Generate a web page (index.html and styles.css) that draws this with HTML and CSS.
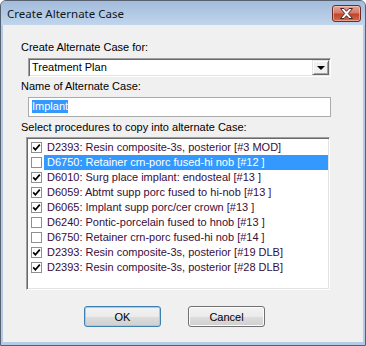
FILE: index.html
```html
<!DOCTYPE html>
<html lang="en">
<head>
  <meta charset="UTF-8" />
  <title>Create Alternate Case</title>
  <link rel="stylesheet" href="styles.css">
</head>
<body>
  <div class="window">
    <!-- Title bar -->
    <div class="titlebar">
      <span class="title">Create Alternate Case</span>
      <span class="close">
        <svg width="15" height="11" viewBox="0 0 15 11">
          <path d="M1.5 0.5 H5 L7.5 3.3 L10 0.5 H13.5 L9.3 5.5 L13.5 10.5 H10 L7.5 7.7 L5 10.5 H1.5 L5.7 5.5 Z"
            fill="#fff" stroke="#4b2626" stroke-width="1" stroke-linejoin="round" />
        </svg>
      </span>
    </div>

    <!-- Dialog body -->
    <div class="client">
      <label class="field-label">Create Alternate Case for:</label>
      <div class="combo">
        <span class="combo-value">Treatment Plan</span>
        <span class="combo-btn"><span class="arrow"></span></span>
      </div>

      <label class="field-label">Name of Alternate Case:</label>
      <div class="textbox"><span class="selected">Implant</span></div>

      <label class="field-label">Select procedures to copy into alternate Case:</label>
      <ul class="proc-list">
        <li class="proc"><span class="check"><svg width="9" height="9" viewBox="0 0 9 9"><path d="M1.2 4.4 L3.4 6.8 L7.8 1.6" fill="none" stroke="#000" stroke-width="1.7" /></svg></span><span class="proc-text">D2393: Resin composite-3s, posterior [#3 MOD]</span></li>
        <li class="proc selected-row"><span class="check"></span><span class="proc-text">D6750: Retainer crn-porc fused-hi nob [#12 ]</span></li>
        <li class="proc"><span class="check"><svg width="9" height="9" viewBox="0 0 9 9"><path d="M1.2 4.4 L3.4 6.8 L7.8 1.6" fill="none" stroke="#000" stroke-width="1.7" /></svg></span><span class="proc-text">D6010: Surg place implant: endosteal [#13 ]</span></li>
        <li class="proc"><span class="check"><svg width="9" height="9" viewBox="0 0 9 9"><path d="M1.2 4.4 L3.4 6.8 L7.8 1.6" fill="none" stroke="#000" stroke-width="1.7" /></svg></span><span class="proc-text">D6059: Abtmt supp porc fused to hi-nob [#13 ]</span></li>
        <li class="proc"><span class="check"><svg width="9" height="9" viewBox="0 0 9 9"><path d="M1.2 4.4 L3.4 6.8 L7.8 1.6" fill="none" stroke="#000" stroke-width="1.7" /></svg></span><span class="proc-text">D6065: Implant supp porc/cer crown [#13 ]</span></li>
        <li class="proc"><span class="check"></span><span class="proc-text">D6240: Pontic-porcelain fused to hnob [#13 ]</span></li>
        <li class="proc"><span class="check"></span><span class="proc-text">D6750: Retainer crn-porc fused-hi nob [#14 ]</span></li>
        <li class="proc"><span class="check"><svg width="9" height="9" viewBox="0 0 9 9"><path d="M1.2 4.4 L3.4 6.8 L7.8 1.6" fill="none" stroke="#000" stroke-width="1.7" /></svg></span><span class="proc-text">D2393: Resin composite-3s, posterior [#19 DLB]</span></li>
        <li class="proc"><span class="check"><svg width="9" height="9" viewBox="0 0 9 9"><path d="M1.2 4.4 L3.4 6.8 L7.8 1.6" fill="none" stroke="#000" stroke-width="1.7" /></svg></span><span class="proc-text">D2393: Resin composite-3s, posterior [#28 DLB]</span></li>
      </ul>

      <div class="actions">
        <button class="btn btn-default">OK</button>
        <button class="btn">Cancel</button>
      </div>
    </div>
  </div>
</body>
</html>
```

FILE: styles.css
```css
* {
  box-sizing: border-box;
  margin: 0;
  padding: 0;
}

body {
  background: #fff;
  font-family: "Liberation Sans", Arial, sans-serif;
  font-size: 11px;
  color: #000;
}

.window {
  width: 366px;
  height: 346px;
  border: 1px solid #56606e;
  border-radius: 6px 6px 0 0;
  background: #b4cbe6;
  display: flex;
  flex-direction: column;
  overflow: hidden;
}

.titlebar {
  height: 24px;
  flex: none;
  display: flex;
  align-items: center;
  justify-content: space-between;
  padding: 0 4px 0 6px;
  background: linear-gradient(#a2bcdc, #c1d5ec);
}

.title {
  font-family: "Segoe UI", "Noto Sans", sans-serif;
  font-size: 11.5px;
  color: #101820;
}

.close {
  width: 29px;
  height: 17px;
  border: 1px solid #6b2d2b;
  border-radius: 3px;
  background: linear-gradient(#e6a596 0%, #d77a66 45%, #c3442d 55%, #cf6a4c 100%);
  box-shadow: inset 0 0 0 1px rgba(255, 220, 210, 0.5);
  display: flex;
  align-items: center;
  justify-content: center;
}

.client {
  flex: 1;
  margin: 0 2px 3px 2px;
  background: #f0f0f0;
  padding: 16px 0 0 18px;
}

.field-label {
  display: block;
  height: 13px;
  line-height: 13px;
}

/* Combo box */
.combo {
  width: 303px;
  height: 19px;
  margin: 4px 0 3px 7px;
  background: #fff;
  border: 1px solid;
  border-color: #a0a0a0 #fff #fff #a0a0a0;
  box-shadow: inset 1px 1px 0 #696969, inset -1px -1px 0 #e3e3e3;
  display: flex;
  align-items: flex-start;
  padding: 1px 1px 1px 2px;
}

.combo-value {
  flex: 1;
  line-height: 15px;
  padding-left: 1px;
}

.combo-btn {
  width: 17px;
  height: 15px;
  background: #f0f0f0;
  border: 1px solid;
  border-color: #e3e3e3 #696969 #696969 #e3e3e3;
  box-shadow: inset 1px 1px 0 #fff, inset -1px -1px 0 #a0a0a0;
  display: flex;
  align-items: center;
  justify-content: center;
}

.arrow {
  width: 0;
  height: 0;
  border: 4px solid transparent;
  border-top: 4px solid #000;
  border-bottom: none;
  margin-top: 1px;
}

/* Text box */
.textbox {
  width: 303px;
  height: 20px;
  margin: 4px 0 4px 7px;
  background: #fff;
  border: 1px solid #ababab;
  padding: 2px 0 0 3px;
}

.selected {
  display: inline-block;
  line-height: 13px;
  background: #3399ff;
  color: #fff;
}

/* Procedure list */
.proc-list {
  list-style: none;
  width: 304px;
  height: 153px;
  margin: 3px 0 0 5px;
  background: #fff;
  border: 1px solid;
  border-color: #a0a0a0 #fff #fff #a0a0a0;
  box-shadow: inset 1px 1px 0 #696969, inset -1px -1px 0 #e3e3e3;
  padding: 2px 1px 0 1px;
}

.proc {
  height: 15px;
  display: flex;
  align-items: center;
  padding-left: 3px;
  color: #3a0d3a;
}

.check {
  width: 11px;
  height: 11px;
  flex: none;
  border: 1px solid #8e8f8f;
  background: #fff;
  display: flex;
  align-items: center;
  justify-content: center;
}

.proc-text {
  flex: 1;
  margin-left: 2px;
  padding-left: 3px;
  line-height: 15px;
  white-space: nowrap;
}

.selected-row .proc-text {
  background: #3399ff;
  color: #fff;
}

/* Buttons */
.actions {
  display: flex;
  gap: 27px;
  margin: 16px 0 0 63px;
}

.btn {
  width: 77px;
  height: 21px;
  font-family: "Liberation Sans", Arial, sans-serif;
  font-size: 11px;
  color: #000;
  border: 1px solid #707070;
  border-radius: 3px;
  background: linear-gradient(#f2f2f2 0%, #ebebeb 50%, #dddddd 51%, #cfcfcf 100%);
  box-shadow: inset 0 0 0 1px #fcfcfc;
}

.btn-default {
  border-color: #3c7fb1;
  box-shadow: inset 0 0 0 1px #7fdbf8;
}
```
